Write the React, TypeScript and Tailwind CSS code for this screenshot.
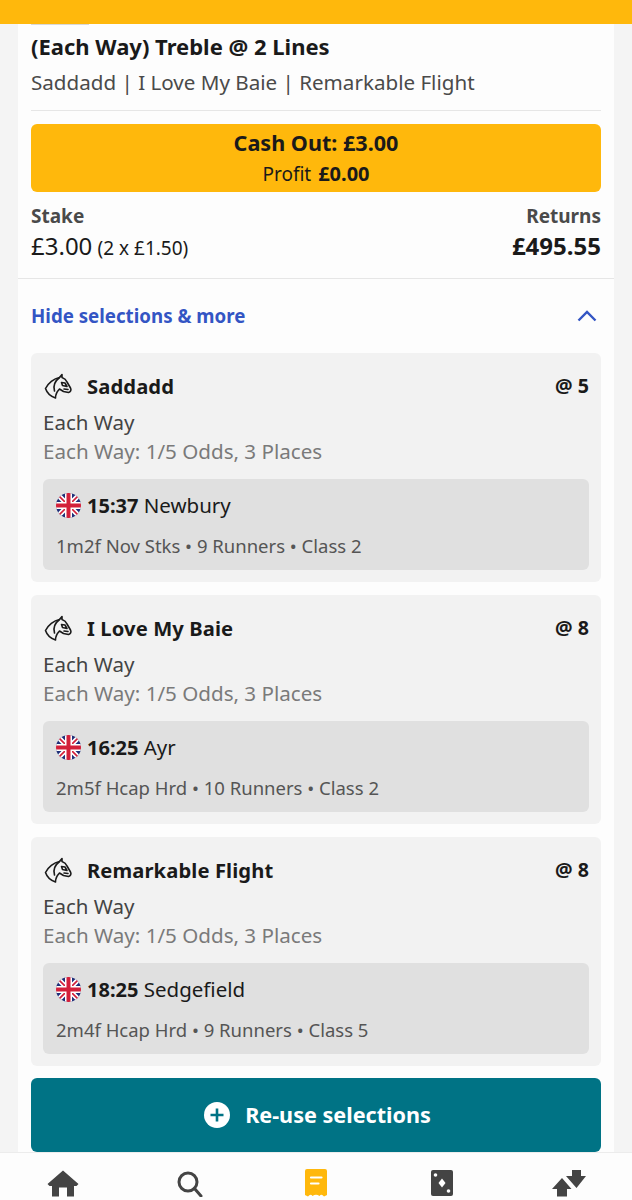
const F = "font-['Noto_Sans',sans-serif]";

function Horse() {
  return (
    <svg width="28" height="26" viewBox="0 0 28 26" fill="none" stroke="#1a1a1a" strokeWidth="1.6" strokeLinejoin="round" strokeLinecap="round" className="ml-px shrink-0">
      <path d="M18 1.5 L15.5 4.5 C10 5.5 4 10 1.5 15.5 C3 20 7 23.5 11.5 25 C11.5 21.5 13 18.5 15.5 16 L19.5 18.5 L24.5 19.5 C26.5 19 27.5 17 26.5 15 L23 9 C22 6.5 19.5 5 18 4.5 Z" />
      <path d="M15.5 4.5 C11 8 9 13 10.5 18 M17.5 9.5 L21 10 L23 13.5 L18.5 12.5 Z M20 16 L24 16.5" />
    </svg>
  );
}

function Flag() {
  return (
    <svg width="25" height="25" viewBox="0 0 25 25" className="shrink-0">
      <defs>
        <clipPath id="flagc">
          <circle cx="12.5" cy="12.5" r="12.5" />
        </clipPath>
      </defs>
      <g clipPath="url(#flagc)">
        <rect width="25" height="25" fill="#1f2f78" />
        <path d="M0 0 L25 25 M25 0 L0 25" stroke="#fff" strokeWidth="5" />
        <path d="M0 0 L25 25 M25 0 L0 25" stroke="#d3203a" strokeWidth="1.6" />
        <path d="M12.5 0 V25 M0 12.5 H25" stroke="#fff" strokeWidth="7" />
        <path d="M12.5 0 V25 M0 12.5 H25" stroke="#d3203a" strokeWidth="4" />
      </g>
    </svg>
  );
}

function Selection({ name, odds, time, course, info }: { name: string; odds: string; time: string; course: string; info: string }) {
  return (
    <div className="h-[229px] rounded-md bg-[#f2f2f2] px-3 pt-[19px]">
      <div className="flex h-[28px] items-center justify-between">
        <div className="flex items-center gap-[15px]">
          <Horse />
          <span className="text-[20.2px] font-bold leading-[28px] tracking-[0.1px] text-[#1a1a1a]">{name}</span>
        </div>
        <span className="text-[19.6px] font-bold text-[#1a1a1a]">{odds}</span>
      </div>
      <div className="mt-[8px] text-[20.5px] leading-[29px] text-[#444]">Each Way</div>
      <div className="text-[20.6px] leading-[29px] text-[#7a7a7a]">Each Way: 1/5 Odds, 3 Places</div>
      <div className="mt-[13px] h-[91px] rounded-md bg-[#e0e0e0] px-[13px] pt-[12px]">
        <div className="flex h-[28px] items-center gap-[6px]">
          <Flag />
          <span className="text-[20.5px] leading-[28px] text-[#1a1a1a]">
            <b className="text-[20px] font-bold">{time}</b> {course}
          </span>
        </div>
        <div className="mt-[14px] text-[18.5px] leading-[26px] text-[#555]">{info}</div>
      </div>
    </div>
  );
}

function Nav() {
  return (
    <div className="grid h-[48px] shrink-0 grid-cols-5 justify-items-center border-t border-[#ececec] bg-[#fdfdfd] pt-[16px]">
      <svg width="32" height="27" viewBox="0 0 32 27" className="mt-[1px]">
        <path d="M16 0.5 L31.5 14 L29.5 16 L27 16 V26.5 H20 V17.5 H12 V26.5 H5 V16 L2.5 16 L0.5 14 Z" fill="#444" />
      </svg>
      <svg width="26" height="26" viewBox="0 0 26 26" fill="none" stroke="#444" strokeWidth="3" className="mt-[2px]">
        <circle cx="11" cy="11" r="9" />
        <path d="M17.5 17.5 L24 25" strokeLinecap="round" />
      </svg>
      <svg width="22" height="28" viewBox="0 0 22 28">
        <path d="M2 0 H20 Q22 0 22 2 V26 L19 27.5 Q16.5 24.5 14.5 27 Q11 24.5 7.5 27 Q5.5 24.5 3 27.5 L0 26 V2 Q0 0 2 0 Z" fill="#ffb80c" />
        <path d="M6 8.5 H16.5 M6 14.5 H13.5" stroke="#fff" strokeWidth="2.2" strokeLinecap="round" />
      </svg>
      <svg width="22" height="26" viewBox="0 0 22 26" className="mt-[1px]">
        <rect width="22" height="26" rx="2" fill="#444" />
        <path d="M11 8.5 L14.5 13 L11 17.5 L7.5 13 Z" fill="#fff" />
        <circle cx="4.5" cy="5" r="1.8" fill="#fff" />
        <circle cx="17.5" cy="21" r="1.8" fill="#fff" />
      </svg>
      <svg width="34" height="27" viewBox="0 0 34 27" className="mt-[1px]">
        <path d="M20 0 H29 V6 H34 L24.5 18 L14 6 H20 Z" fill="#444" />
        <path d="M10 8 L19.5 19 H15 V26.5 H5 V19 H0 Z" fill="#444" />
      </svg>
    </div>
  );
}

export default function App() {
  return (
    <div className={`${F} flex h-[1200px] w-[632px] flex-col overflow-hidden bg-[#f4f4f4]`}>
      <div className="h-6 shrink-0 bg-[#ffb80c]" />
      <div className="mx-[18px] flex min-h-0 flex-1 flex-col overflow-hidden bg-[#fdfdfd]">
        <div className="px-[13px]">
          <div className="h-px w-[58px] bg-[#d8d8d8]" />
          <div className="mt-[6px] text-[22px] font-bold leading-[30px] text-[#1a1a1a]">(Each Way) Treble @ 2 Lines</div>
          <div className="mt-[6px] text-[20.6px] leading-[30px] text-[#4a4a4a]">Saddadd | I Love My Baie | Remarkable Flight</div>
          <div className="mt-[13px] border-t border-[#e6e6e6]" />
          <div className="mt-[13px] flex h-[68px] flex-col items-center rounded-md bg-[#ffb80c] pt-[4px] text-[#1a1a1a]">
            <div className="text-[21.6px] font-bold leading-[30px]">Cash Out: £3.00</div>
            <div className="mt-[1px] text-[19px] leading-[30px]">
              Profit <b className="ml-[2px] text-[20px] font-bold">£0.00</b>
            </div>
          </div>
          <div className="mt-[11px] flex justify-between">
            <div>
              <div className="text-[19px] font-bold leading-[26px] text-[#4a4a4a]">Stake</div>
              <div className="mt-[1px] leading-[32px] text-[#1a1a1a]">
                <span className="text-[24px]">£3.00</span> <span className="ml-[1px] text-[19px]">(2 x £1.50)</span>
              </div>
            </div>
            <div className="text-right">
              <div className="text-[19px] font-bold leading-[26px] text-[#4a4a4a]">Returns</div>
              <div className="mt-[1px] text-[24px] font-bold leading-[32px] text-[#1a1a1a]">£495.55</div>
            </div>
          </div>
        </div>
        <div className="mt-[13px] border-t border-[#e6e6e6]" />
        <div className="flex h-[74px] shrink-0 items-center justify-between px-[13px]">
          <span className="text-[18.7px] font-bold text-[#3355c4]">Hide selections &amp; more</span>
          <svg width="20" height="12" viewBox="0 0 20 12" fill="none" stroke="#3355c4" strokeWidth="2.4" className="mr-[4px]">
            <path d="M1.5 10.5 L10 2 L18.5 10.5" />
          </svg>
        </div>
        <div className="flex flex-col gap-[13px] px-[13px]">
          <Selection name="Saddadd" odds="@ 5" time="15:37" course="Newbury" info="1m2f Nov Stks • 9 Runners • Class 2" />
          <Selection name="I Love My Baie" odds="@ 8" time="16:25" course="Ayr" info="2m5f Hcap Hrd • 10 Runners • Class 2" />
          <Selection name="Remarkable Flight" odds="@ 8" time="18:25" course="Sedgefield" info="2m4f Hcap Hrd • 9 Runners • Class 5" />
          <div className="-mt-px flex h-[74px] shrink-0 items-center justify-center gap-[15px] rounded-md bg-[#007385] pl-[3px] text-white">
            <svg width="26" height="26" viewBox="0 0 26 26">
              <circle cx="13" cy="13" r="13" fill="#fff" />
              <path d="M13 6.5 V19.5 M6.5 13 H19.5" stroke="#007385" strokeWidth="2.6" />
            </svg>
            <span className="text-[21.6px] font-bold">Re-use selections</span>
          </div>
        </div>
      </div>
      <Nav />
    </div>
  );
}
